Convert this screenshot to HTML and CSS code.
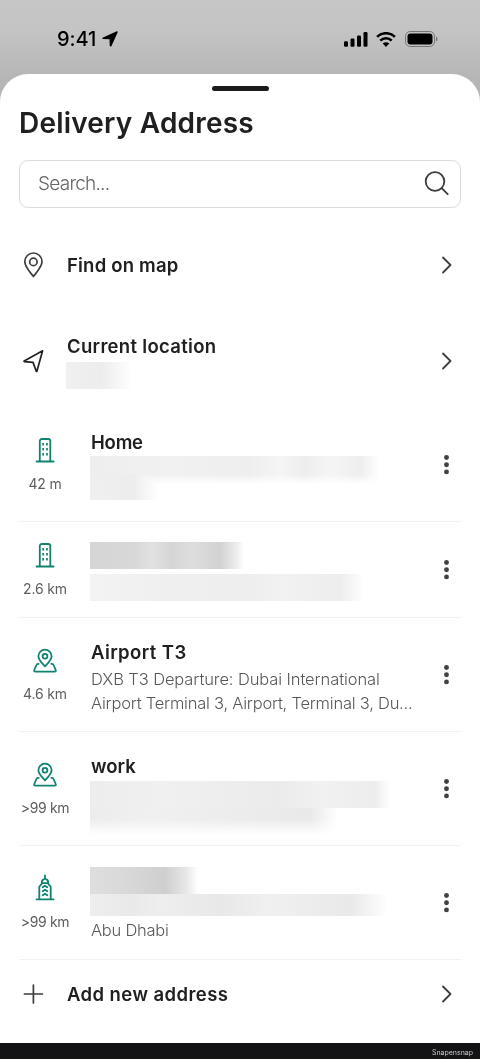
FILE: index.html
```html
<!DOCTYPE html>
<html lang="en">
<head>
<meta charset="utf-8">
<title>Delivery Address</title>
<link rel="stylesheet" href="styles.css">
</head>
<body>
<svg class="defs" width="0" height="0">
  <symbol id="chevron" viewBox="0 0 12 18"><path d="M2 1.500 9.500 9 2 16.500"/></symbol>
  <symbol id="dots" viewBox="0 0 6 22"><circle cx="3.500" cy="3.500" r="2.450"/><circle cx="3.500" cy="10.700" r="2.450"/><circle cx="3.500" cy="17.900" r="2.450"/></symbol>
  <symbol id="building" viewBox="0 0 24 26"><path d="M3.600 24.500h17M6.800 24.300V4a2 2 0 0 1 2-2h6.500a2 2 0 0 1 2 2v20.300"/><path class="windows" d="M10.200 6v2.600M14 6v2.600M10.200 11v2.600M14 11v2.600M10.200 15.900v2.600M14 15.900v2.600"/></symbol>
  <symbol id="mappin" viewBox="0 0 24 26"><path d="M12 19.300C9.200 16.300 5.400 12.900 5.400 9.200a6.600 6.600 0 0 1 13.200 0c0 3.700-3.800 7.100-6.600 10.100Z"/><circle cx="12" cy="9.200" r="2.400"/><path d="M5.700 16.800H5a1.700 1.700 0 0 0-1.600 1.200L1.300 23c-.4 1 .1 1.600 1 1.600h19.400c.9 0 1.400-.6 1-1.600l-2.100-5a1.700 1.700 0 0 0-1.600-1.200h-.7"/></symbol>
  <symbol id="tower" viewBox="0 0 24 28"><path d="M3.600 26.400h17M6.300 26V13.800l3-3.700h5.400l3 3.700V26M8.700 10.100c0-2.300 1.300-3.900 3.300-4.400 2 .5 3.300 2.100 3.300 4.400M12 2.300v3.400"/><path class="arches" d="m9.700 14.300 2.300-1.500 2.300 1.500M9.700 18.300l2.300-1.500 2.300 1.500M9.700 22.200l2.300-1.500 2.300 1.500"/></symbol>
</svg>
<header class="status">
  <div class="clock">
    <span class="time">9:41</span>
    <svg width="16" height="16" viewBox="0 0 16 16"><path d="M14.300.400 1 6.400c-1 .500-.8 1.600.3 1.700l6.200.2.200 6.300c.1 1.200 1.300 1.300 1.800.3L15.600 1.600c.4-.9-.4-1.600-1.300-1.200Z"/></svg>
  </div>
  <div class="indicators">
    <svg class="signal" width="24" height="15" viewBox="0 0 24 15"><rect x="0" y="9.200" width="4" height="5.600" rx="1.200"/><rect x="6.500" y="6.600" width="4" height="8.200" rx="1.200"/><rect x="13" y="3.600" width="4" height="11.200" rx="1.200"/><rect x="19.500" y="0" width="4" height="14.800" rx="1.200"/></svg>
    <svg class="wifi" width="20" height="15" viewBox="0 0 20 15"><path d="M1.100 4.900A12.600 12.600 0 0 1 18.900 4.900M4.300 8.600a8 8 0 0 1 11.400 0"/><path class="solid" d="M6.700 11.600a5 5 0 0 1 6.600 0L10 14.900Z"/></svg>
    <svg class="battery" width="33" height="16" viewBox="0 0 33 16"><rect class="shell" x=".5" y=".5" width="29" height="15" rx="4.700"/><rect x="2.500" y="2.500" width="25" height="11" rx="3"/><path class="cap" d="M31 5.500c2 .7 2 4.300 0 5Z"/></svg>
  </div>
</header>
<main class="sheet">
  <div class="handle"></div>
  <h1 class="heading">Delivery Address</h1>
  <div class="search">
    <span class="placeholder">Search...</span>
    <svg width="26" height="26" viewBox="0 0 26 26"><circle cx="11" cy="11.500" r="9.300"/><path d="m17.700 18.200 6 6"/></svg>
  </div>

  <div class="row find">
    <svg class="lead" viewBox="0 0 26 26"><path d="M13.400 24.500C10.400 20.500 4.800 15.100 4.800 9.600a8.600 8.600 0 0 1 17.200 0C22 15.100 16.400 20.500 13.400 24.500Z"/><circle cx="13.400" cy="9.900" r="3.700"/></svg>
    <span class="name t-find">Find on map</span>
    <svg class="chevron"><use href="#chevron"/></svg>
  </div>
  <div class="row current">
    <svg class="lead dark" viewBox="0 0 26 26"><path d="M22.600 2.800 4.200 12.900c-.3.300-.2.600.2.700l8.600.8 3.300 8.900c.2.300.5.300.6-.1Z"/></svg>
    <div>
      <div class="name t-current">Current location</div>
      <div class="blur blur-current"></div>
    </div>
    <svg class="chevron"><use href="#chevron"/></svg>
  </div>

  <section class="item home">
    <div class="place"><svg class="kind"><use href="#building"/></svg><span class="distance">42 m</span></div>
    <div class="details"><div class="name t-home">Home</div><div class="blur-home"><div class="blur line-a"></div><div class="blur line-b"></div></div></div>
    <svg class="dots"><use href="#dots"/></svg>
  </section>
  <section class="item second">
    <div class="place"><svg class="kind"><use href="#building"/></svg><span class="distance">2.6 km</span></div>
    <div class="details hidden-lines"><div class="blur title-a"></div><div class="blur line-c"></div></div>
    <svg class="dots"><use href="#dots"/></svg>
  </section>
  <section class="item">
    <div class="place"><svg class="kind"><use href="#mappin"/></svg><span class="distance">4.6 km</span></div>
    <div class="details"><div class="name t-airport">Airport T3</div><div class="address lines"><span class="a-one">DXB T3 Departure: Dubai International</span><br><span class="a-two">Airport Terminal 3, Airport, Terminal 3, Du...</span></div></div>
    <svg class="dots"><use href="#dots"/></svg>
  </section>
  <section class="item">
    <div class="place"><svg class="kind"><use href="#mappin"/></svg><span class="distance far">&gt;99 km</span></div>
    <div class="details"><div class="name t-work">work</div><div class="blur-work"><div class="blur line-d"></div><div class="blur line-e"></div></div></div>
    <svg class="dots"><use href="#dots"/></svg>
  </section>
  <section class="item">
    <div class="place"><svg class="kind tall"><use href="#tower"/></svg><span class="distance far">&gt;99 km</span></div>
    <div class="details city"><div class="blur title-b"></div><div class="blur line-f"></div><div class="address a-city">Abu Dhabi</div></div>
    <svg class="dots"><use href="#dots"/></svg>
  </section>

  <div class="row add">
    <svg class="lead" viewBox="0 0 26 26"><path d="M13.400 4v18M4.400 13h18"/></svg>
    <span class="name t-add">Add new address</span>
    <svg class="chevron"><use href="#chevron"/></svg>
  </div>
</main>
<footer class="credit">Snapensnap</footer>
</body>
</html>
```
FILE: styles.css
```css
* { box-sizing: border-box; }
body {
  margin: 0;
  width: 480px;
  height: 1059px;
  overflow: hidden;
  font-family: Inter, "Liberation Sans", sans-serif;
  color: #202022;
  background: linear-gradient(#c6c6c6 0, #c4c4c4 30px, #b7b7b7 74px, #b2b2b2 110px);
}
svg { display: block; flex: none; }
.defs { position: absolute; }

.status {
  height: 74px;
  display: flex;
  justify-content: space-between;
  padding: 29px 42px 0 57px;
  color: #000;
}
.clock { display: flex; height: 20px; align-items: center; gap: 6px; }
.time { font-size: 20px; font-weight: 550; line-height: 20px; letter-spacing: -0.1px; }
.indicators { display: flex; height: 20px; align-items: center; }
.wifi { margin-left: 8px; fill: none; stroke: #000; stroke-width: 2.6; }
.wifi .solid { fill: #000; stroke: none; }
.battery { margin-left: 9px; }
.shell { fill: none; stroke: #777; }
.cap { fill: #777; }

.sheet {
  height: 969px;
  background: #fff;
  border-radius: 28px 28px 0 0;
  padding: 12px 19px 0;
}
.handle { width: 57px; height: 5px; border-radius: 3px; background: #1b1b1e; margin: 0 auto; }
.heading { margin: 15px 0 20px; font-size: 28px; line-height: 34px; font-weight: 600; letter-spacing: 0.2px; white-space: nowrap; }
.search {
  height: 48px;
  border: 1.5px solid #dadcdb;
  border-radius: 9px;
  display: flex;
  align-items: center;
  justify-content: space-between;
  padding: 0 10px 2px 18px;
}
.search svg { fill: none; stroke: #3b3b3d; stroke-width: 1.8; stroke-linecap: round; }
.placeholder { font-size: 19px; font-weight: 300; letter-spacing: -0.75px; color: #666668; }

.row { display: grid; grid-template-columns: 26px 1fr 12px; column-gap: 21px; align-items: center; padding: 0 8px 0 1px; }
.find { margin-top: 15px; height: 84px; }
.current { margin-top: 6px; height: 95px; }
.add { height: 67px; }
.lead { width: 26px; height: 26px; fill: none; stroke: #3d3d40; stroke-width: 1.7; stroke-linecap: round; stroke-linejoin: round; }
.lead.dark { stroke: #202124; }
.chevron { width: 12px; height: 18px; fill: none; stroke: #3d3d40; stroke-width: 1.8; stroke-linecap: round; stroke-linejoin: round; }
.name { font-size: 18.5px; line-height: 28px; font-weight: 600; white-space: nowrap; }
.t-find { letter-spacing: 0.2px; }
.t-current { letter-spacing: 0.3px; }
.t-home { letter-spacing: -0.2px; }
.t-airport { letter-spacing: 0.4px; }
.t-add { letter-spacing: 0.42px; }

.item {
  height: 114px;
  display: grid;
  grid-template-columns: 52px 1fr 6px;
  column-gap: 20px;
  align-items: center;
  padding-right: 12px;
  border-bottom: 1px solid #f1f2f2;
}
.second { height: 96px; }
.place { display: flex; flex-direction: column; align-items: center; gap: 12px; }
.kind { width: 24px; height: 26px; fill: none; stroke: #118270; stroke-width: 1.8; stroke-linecap: round; stroke-linejoin: round; }
.kind.tall { height: 28px; margin-top: -2px; }
.windows { stroke-width: 1.7; stroke-linecap: butt; }
.arches { stroke-width: 1.9; }
.distance { font-size: 14px; line-height: 18px; letter-spacing: -0.15px; color: #5e5e60; white-space: nowrap; }
.far { letter-spacing: -0.35px; }
.dots { width: 6px; height: 22px; fill: #414143; }
.details { padding-top: 3px; min-height: 80px; }
.address { font-size: 16.5px; line-height: 24px; font-weight: 340; color: #58585a; white-space: nowrap; }
.lines { padding-top: 1px; }
.a-one { letter-spacing: -0.1px; }
.a-two { letter-spacing: -0.23px; }
.a-city { letter-spacing: -0.25px; }

.blur { height: 27px; margin-left: -1px; }
.blur-current { margin-top: 2px; width: 66px; background: linear-gradient(90deg, #f0f0f0, #ececec 35px, #f4f4f4 48px, #fff 66px); }
.blur-home { height: 48px; }
.line-a { width: 292px; height: 28px; background: linear-gradient(#fff0 65%, #fff), linear-gradient(90deg, #eee, #f1f1f1 80px, #eee 160px, #f5f5f5 190px, #ededed 215px, #f5f5f5 240px, #eee 270px, #fff 290px); }
.line-b { width: 68px; height: 26px; margin-top: -10px; mix-blend-mode: darken; background: linear-gradient(90deg, #efefef, #ededed 44px, #fff); }
.hidden-lines { padding-top: 3px; min-height: 59px; }
.title-a { width: 154px; background: linear-gradient(90deg, #d5d5d5, #d8d8d8 45px, #e1e1e1 62px, #d5d5d5 82px, #dedede 102px, #d2d2d2 130px, #eee 147px, #fff); }
.line-c { margin-top: 5px; width: 274px; background: linear-gradient(90deg, #f3f3f3, #efefef 80px, #eee 160px, #f2f2f2 190px, #ededed 250px, #fff 274px); }
.blur-work { height: 48px; padding-top: 1px; }
.line-d { width: 300px; background: linear-gradient(90deg, #ededed, #f0f0f0 70px, #ebebeb 190px, #f1f1f1 230px, #ededed 285px, #fff); }
.line-e { width: 248px; background: linear-gradient(#fff0 40%, #fff), linear-gradient(90deg, #ececec, #f0f0f0 60px, #e9e9e9 220px, #fff); }
.city { padding: 3px 0 0; min-height: 0; }
.title-b { width: 108px; background: linear-gradient(90deg, #dedede, #d9d9d9 35px, #cfcfcf 75px, #e7e7e7 96px, #fff); }
.line-f { width: 300px; height: 22px; margin-bottom: 2px; background: linear-gradient(90deg, #eee, #e9e9e9 40px, #eee 70px, #e8e8e8 130px, #f0f0f0 180px, #e9e9e9 260px, #fff 298px); }

.credit { height: 16px; background: #131315; color: #c9c9c9; font-size: 7px; line-height: 19px; text-align: right; padding-right: 7px; }
```
